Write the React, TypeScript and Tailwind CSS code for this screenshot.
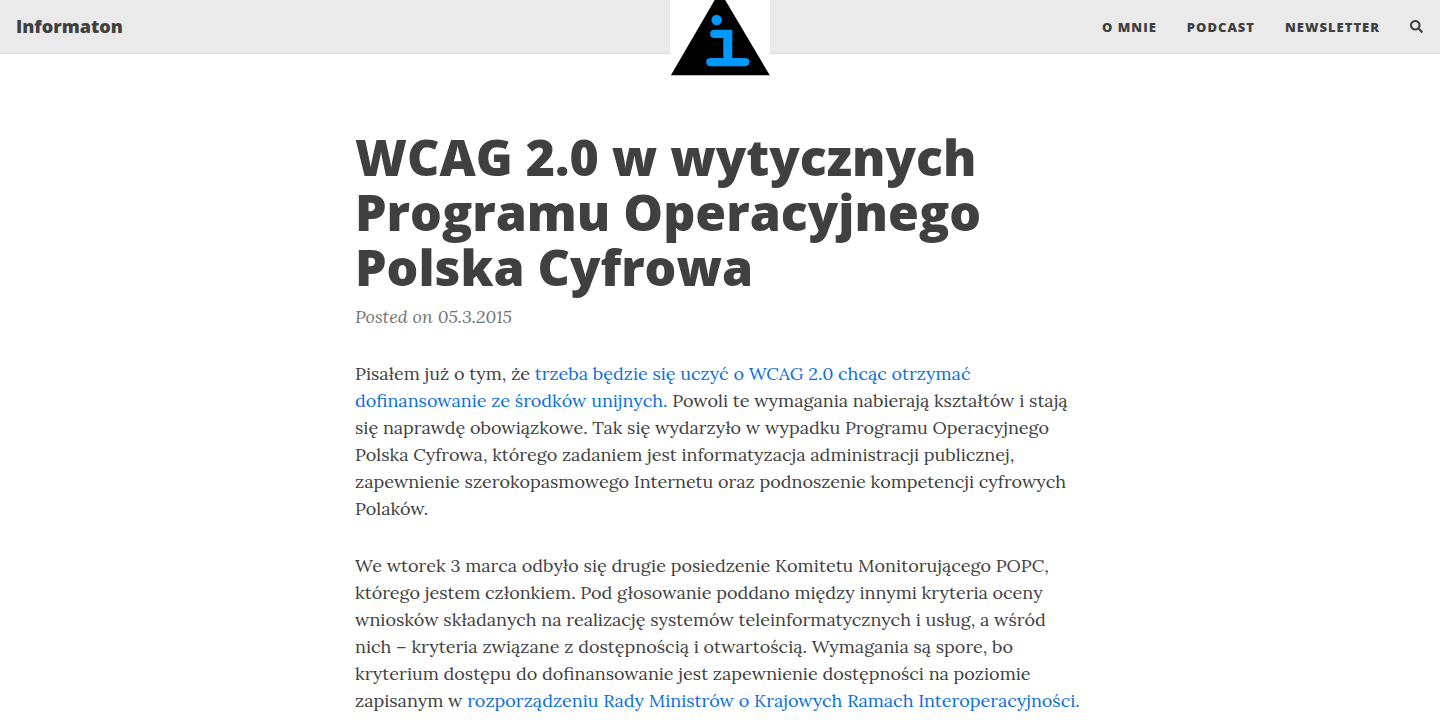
import React from "react";
import { FaSearch } from "react-icons/fa";

const navLinks = ["O mnie", "Podcast", "Newsletter"];

const linkStyle = "text-[#0b6fe0] hover:underline";

function Logo() {
  return (
    <svg viewBox="0 0 100 90" className="block w-full" role="img" aria-label="Informaton">
      <rect width="100" height="90" fill="#fff" />
      <path d="M44.7 0H55.2L99.8 75.3H0.9Z" fill="#000" />
      <circle cx="46.7" cy="20" r="5.2" fill="#0099ff" />
      <path
        d="M44.5 29.8H62.3V58H74.8Q79.5 58 79.5 62.1T74.8 66.3H41Q36.2 66.3 36.2 62.1T41 58H53.3V38H44.5Q40.2 38 40.2 33.9T44.5 29.8Z"
        fill="#0099ff"
      />
    </svg>
  );
}

function Header() {
  return (
    <header className="relative flex h-[54px] items-center justify-between border-b border-[#dddddd] bg-[#eaeaea] px-4 font-['Open_Sans',sans-serif] text-[#404040]">
      <a href="#home" className="pb-0.5 text-lg font-extrabold">
        Informaton
      </a>
      <a href="#home" className="absolute top-0 left-1/2 w-[100px] -translate-x-1/2">
        <Logo />
      </a>
      <nav className="flex items-center gap-[30px] pr-px text-[13px] leading-5 font-extrabold tracking-[1px] uppercase">
        {navLinks.map((label) => (
          <a key={label} href={"#" + label.toLowerCase().replace(" ", "-")}>
            {label}
          </a>
        ))}
        <button type="button" aria-label="Search">
          <FaSearch />
        </button>
      </nav>
    </header>
  );
}

export default function App() {
  return (
    <div className="min-h-screen bg-white">
      <Header />
      <main className="mx-auto max-w-[730px] pt-[76px] font-['Lora','Liberation_Serif',serif] text-[18px] leading-[27px] text-[#404040]">
        <h1 className="font-['Open_Sans',sans-serif] text-[50px] leading-[55px] font-extrabold">
          WCAG 2.0 w wytycznych Programu Operacyjnego Polska Cyfrowa
        </h1>
        <p className="mt-2 text-[#747474] italic">Posted on 05.3.2015</p>
        <p className="mt-[30px]">
          Pisałem już o tym, że{" "}
          <a href="#wcag" className={linkStyle}>
            trzeba będzie się uczyć o WCAG 2.0 chcąc otrzymać dofinansowanie ze środków unijnych.
          </a>{" "}
          Powoli te wymagania nabierają kształtów i stają się naprawdę obowiązkowe. Tak się
          wydarzyło w wypadku Programu Operacyjnego Polska Cyfrowa, którego zadaniem jest
          informatyzacja administracji publicznej, zapewnienie szerokopasmowego Internetu oraz
          podnoszenie kompetencji cyfrowych Polaków.
        </p>
        <p className="mt-[30px]">
          We wtorek 3 marca odbyło się drugie posiedzenie Komitetu Monitorującego POPC, którego
          jestem członkiem. Pod głosowanie poddano między innymi kryteria oceny wniosków
          składanych na realizację systemów teleinformatycznych i usług, a wśród nich – kryteria
          związane z dostępnością i otwartością. Wymagania są spore, bo kryterium dostępu do
          dofinansowanie jest zapewnienie dostępności na poziomie zapisanym w{" "}
          <a href="#kri" className={linkStyle}>
            rozporządzeniu Rady Ministrów o Krajowych Ramach Interoperacyjności.
          </a>
        </p>
      </main>
    </div>
  );
}
